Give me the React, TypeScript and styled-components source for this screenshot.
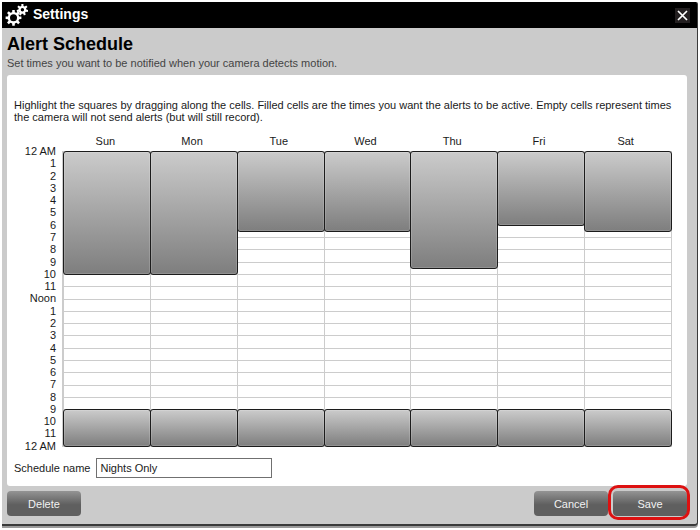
import React, { useState } from "react";
import styled, { createGlobalStyle } from "styled-components";

const GlobalStyle = createGlobalStyle`
  *, *::before, *::after { box-sizing: border-box; }
  body {
    margin: 0;
    background: #fff;
    color: #1a1a1a;
    font-family: "Liberation Sans", Arial, sans-serif;
    font-size: 11px;
    line-height: 12px;
  }
  h1, h2, p { margin: 0; }
`;

const Window = styled.main`
  margin: 2px;
  background: #cbcbcb;
  border-right: 1px solid #3a3a3a;
  border-bottom: 2px solid #3a3a3a;
  border-radius: 0 2px 4px 0;
  box-shadow: 0 2px 0 #9a9a9a;
  overflow: hidden;
`;

const TitleBar = styled.header`
  display: flex;
  align-items: center;
  gap: 5px;
  height: 26px;
  padding: 0 7px 0 3px;
  background: #000;
  color: #fff;
`;

const Title = styled.h1`
  flex: 1;
  padding-bottom: 2px;
  font-size: 14px;
  line-height: 16px;
`;

const CloseButton = styled.button`
  display: flex;
  align-items: center;
  justify-content: center;
  width: 15px;
  height: 15px;
  padding: 0;
  border: 0;
  background: #231f20;
  color: #fff;
`;

const Body = styled.div`
  padding: 6px 10px 8px 5px;
`;

const Heading = styled.h2`
  color: #000;
  font-size: 18px;
  line-height: 20px;
`;

const Subheading = styled.p`
  margin-bottom: 4px;
  padding-top: 1px;
  color: #444;
  line-height: 16px;
`;

const Panel = styled.section`
  padding: 24px 7px 8px;
  background: #fff;
  border-radius: 3px;
`;

const Schedule = styled.div`
  display: flex;
  align-items: flex-end;
  gap: 6px;
  margin: 12px 8px 0 0;
`;

const Hours = styled.div`
  display: flex;
  flex-direction: column;
  justify-content: space-between;
  width: 42px;
  height: 308px;
  padding-bottom: 1px;
  text-align: right;
`;

const Calendar = styled.div`
  flex: 1;
  padding-bottom: 6px;
`;

const DayNames = styled.div`
  display: grid;
  grid-template-columns: repeat(7, 1fr);
  padding: 0 3px 4px 0;
  text-align: center;
`;

const Days = styled.div`
  display: grid;
  grid-template-columns: repeat(7, 1fr);
  height: 296px;
  border: 1px solid #ccc;
  border-width: 0 1px 1px;
`;

const Day = styled.div`
  display: grid;
  grid-template-rows: repeat(48, 1fr);
  border-left: 1px solid #ccc;
`;

const HourCell = styled.div<{ $hour: number }>`
  grid-column: 1;
  grid-row: ${(p) => p.$hour * 2 + 1} / span 2;
  border-top: 1px solid #ccc;
`;

const ActiveBlock = styled.div<{ $from: number; $to: number }>`
  grid-column: 1;
  grid-row: ${(p) => p.$from * 2 + 1} / ${(p) => p.$to * 2 + 1};
  z-index: 1;
  margin: 0 -1px -1px;
  border: 1px solid #1c1c1c;
  border-radius: 3px;
  background: linear-gradient(#cbcbcb, #7e7e7e);
  box-shadow: inset 0 0 0 1px rgba(255, 255, 255, 0.15);
`;

const NameRow = styled.div`
  display: flex;
  align-items: center;
  gap: 6px;
  margin-top: 5px;
`;

const NameInput = styled.input`
  width: 176px;
  height: 20px;
  padding: 0 3px;
  border: 1px solid #707070;
  background: #fff;
  color: #1a1a1a;
  font: inherit;
`;

const Actions = styled.footer`
  display: flex;
  gap: 5px;
  margin-top: 5px;
`;

const Spacer = styled.span`
  flex: 1;
`;

const Button = styled.button`
  width: 74px;
  height: 25px;
  padding: 0;
  border: 0;
  border-radius: 4px;
  background: linear-gradient(#949494, #5f5f5f 55%, #5f5f5f);
  color: #f2f2f2;
  font: inherit;
`;

const Highlighted = styled.span`
  position: relative;
  display: flex;

  &::after {
    content: "";
    position: absolute;
    inset: -6px -3px -4px -5px;
    border: 3px solid #dd1111;
    border-radius: 10px;
    pointer-events: none;
  }
`;

const gearPath = (cx: number, cy: number, teeth: number, outer: number, inner: number) => {
  const points: string[] = [];
  const step = (Math.PI * 2) / teeth;
  for (let i = 0; i < teeth; i++) {
    const base = i * step - Math.PI / 2;
    [
      [-0.3, inner],
      [-0.2, outer],
      [0.2, outer],
      [0.3, inner],
    ].forEach(([offset, radius]) => {
      const angle = base + offset * step;
      points.push(`${(cx + radius * Math.cos(angle)).toFixed(2)} ${(cy + radius * Math.sin(angle)).toFixed(2)}`);
    });
  }
  return `M${points.join("L")}Z`;
};

const hole = (cx: number, cy: number, r: number) =>
  `M${cx - r} ${cy}a${r} ${r} 0 1 0 ${r * 2} 0a${r} ${r} 0 1 0 ${-r * 2} 0Z`;

const GearsIcon = () => (
  <svg width="23" height="24" viewBox="0 0 23 24" fill="#fff" fillRule="evenodd" aria-hidden="true">
    <path d={gearPath(8.5, 14.8, 8, 8, 5.8) + hole(8.5, 14.8, 3.5)} />
    <path d={gearPath(17.4, 6.8, 7, 5.8, 4) + hole(17.4, 6.8, 1.7)} />
  </svg>
);

const CloseIcon = () => (
  <svg width="11" height="11" viewBox="0 0 11 11" stroke="currentColor" strokeWidth="1.7" aria-hidden="true">
    <path d="M1 1L10 10M10 1L1 10" />
  </svg>
);

const days = [
  { name: "Sun", morningEnd: 10 },
  { name: "Mon", morningEnd: 10 },
  { name: "Tue", morningEnd: 6.5 },
  { name: "Wed", morningEnd: 6.5 },
  { name: "Thu", morningEnd: 9.5 },
  { name: "Fri", morningEnd: 6 },
  { name: "Sat", morningEnd: 6.5 },
];

const hourLabel = (hour: number) => {
  if (hour % 24 === 0) return "12 AM";
  if (hour === 12) return "Noon";
  return String(hour % 12);
};

export default function App() {
  const [name, setName] = useState("Nights Only");

  return (
    <>
      <GlobalStyle />
      <Window>
        <TitleBar>
          <GearsIcon />
          <Title>Settings</Title>
          <CloseButton type="button" aria-label="Close">
            <CloseIcon />
          </CloseButton>
        </TitleBar>
        <Body>
          <Heading>Alert Schedule</Heading>
          <Subheading>Set times you want to be notified when your camera detects motion.</Subheading>
          <Panel>
            <p>
              Highlight the squares by dragging along the cells. Filled cells are the times you want the alerts to be
              active. Empty cells represent times the camera will not send alerts (but will still record).
            </p>
            <Schedule>
              <Hours>
                {Array.from({ length: 25 }, (_, hour) => (
                  <span key={hour}>{hourLabel(hour)}</span>
                ))}
              </Hours>
              <Calendar>
                <DayNames>
                  {days.map((day) => (
                    <span key={day.name}>{day.name}</span>
                  ))}
                </DayNames>
                <Days>
                  {days.map((day) => (
                    <Day key={day.name}>
                      {Array.from({ length: 24 }, (_, hour) => (
                        <HourCell key={hour} $hour={hour} />
                      ))}
                      <ActiveBlock $from={0} $to={day.morningEnd} />
                      <ActiveBlock $from={21} $to={24} />
                    </Day>
                  ))}
                </Days>
              </Calendar>
            </Schedule>
            <NameRow>
              <label htmlFor="schedule-name">Schedule name</label>
              <NameInput id="schedule-name" value={name} onChange={(event) => setName(event.target.value)} />
            </NameRow>
          </Panel>
          <Actions>
            <Button type="button">Delete</Button>
            <Spacer />
            <Button type="button">Cancel</Button>
            <Highlighted>
              <Button type="button">Save</Button>
            </Highlighted>
          </Actions>
        </Body>
      </Window>
    </>
  );
}
